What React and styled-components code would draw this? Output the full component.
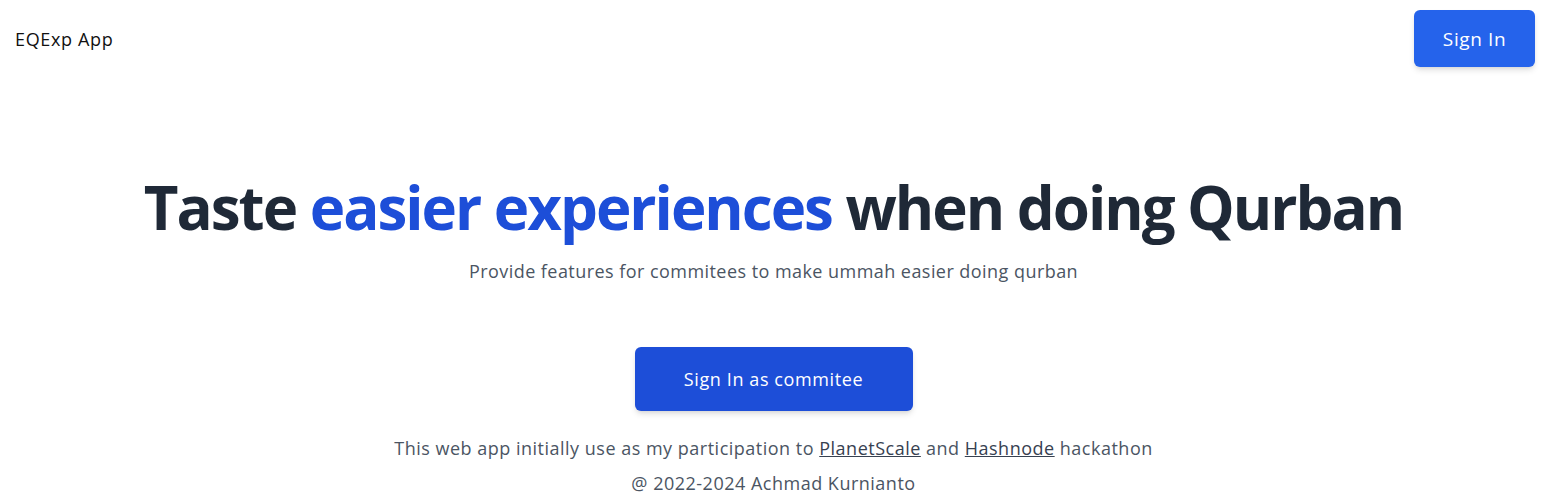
import React from 'react';
import styled, { createGlobalStyle } from 'styled-components';

const GlobalStyle = createGlobalStyle`
  body {
    margin: 0;
    background: #ffffff;
    font-family: "Segoe UI", "Open Sans", "Noto Sans", sans-serif;
    letter-spacing: 0.5px;
    color: #000;
  }
`;

const Nav = styled.nav`
  display: flex;
  justify-content: space-between;
  align-items: center;
  padding: 10px 12px 10px 15px;
`;

const Brand = styled.a`
  font-size: 18px;
  letter-spacing: 0.65px;
  color: #111;
  text-decoration: none;
`;

const Button = styled.button`
  border: none;
  border-radius: 6px;
  color: #fff;
  font-family: inherit;
  font-size: ${(p) => (p.$dark ? '18px' : '19px')};
  letter-spacing: 0.6px;
  cursor: pointer;
  background: ${(p) => (p.$dark ? '#1d4ed8' : '#2563eb')};
  width: ${(p) => p.$width};
  height: ${(p) => p.$height};
  box-shadow: 0 4px 6px -1px rgba(0, 0, 0, 0.12), 0 2px 4px -2px rgba(0, 0, 0, 0.1);
`;

const Hero = styled.main`
  display: flex;
  flex-direction: column;
  align-items: center;
  text-align: center;
  padding-top: 100px;
`;

const Title = styled.h1`
  margin: 0;
  font-size: 60px;
  line-height: 1;
  font-weight: 700;
  letter-spacing: -2px;
  color: #1f2937;
`;

const Accent = styled.span`
  color: #1d4ed8;
`;

const Lead = styled.p`
  margin: 22px 0 64px;
  font-size: 18px;
  letter-spacing: 0.45px;
  color: #4b5563;
`;

const Footer = styled.footer`
  margin-top: 20px;
  font-size: 18px;
  line-height: 35px;
  color: #4b5563;
  text-align: center;

  a {
    color: #374151;
    text-decoration: underline;
  }
`;

const App = () => (
  <>
    <GlobalStyle />
    <Nav>
      <Brand href="#">EQExp App</Brand>
      <Button $width="121px" $height="57px">Sign In</Button>
    </Nav>
    <Hero>
      <Title>
        Taste <Accent>easier experiences</Accent> when doing Qurban
      </Title>
      <Lead>Provide features for commitees to make ummah easier doing qurban</Lead>
      <Button $dark $width="278px" $height="64px">Sign In as commitee</Button>
      <Footer>
        <div>
          This web app initially use as my participation to <a href="#">PlanetScale</a> and{' '}
          <a href="#">Hashnode</a> hackathon
        </div>
        <div>@ 2022-2024 Achmad Kurnianto</div>
      </Footer>
    </Hero>
  </>
);

export default App;
